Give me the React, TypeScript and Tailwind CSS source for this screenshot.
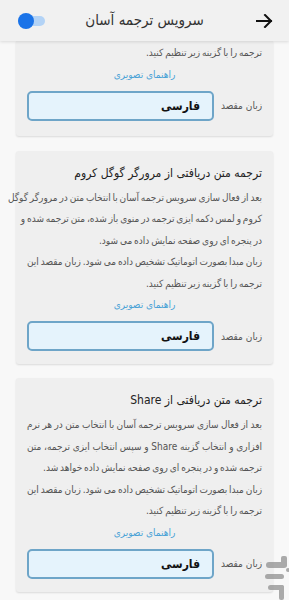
import React from "react";

const FONT = { fontFamily: '"DejaVu Sans Condensed", "DejaVu Sans", sans-serif' };

function Line({ text, justify }: { text: string; justify?: boolean }) {
  return (
    <div
      className={
        "whitespace-nowrap h-[21.5px] leading-[21.5px] [word-spacing:-1px] " +
        (justify ? "text-justify [text-align-last:justify]" : "text-right")
      }
    >
      {text}
    </div>
  );
}

function Target() {
  return (
    <>
      <div className="h-[22px] leading-[22px] text-center text-[10px] text-[#4aa2d6]">
        راهنمای تصویری
      </div>
      <div className="mt-[5px] flex items-center gap-[11px]">
        <div className="text-[10px] text-[#555] whitespace-nowrap w-[37px] shrink-0">زبان مقصد</div>
        <div className="shrink-0 h-[30px] w-[187px] rounded-[5px] border-2 border-[#6ea5c8] bg-[#e5f3fc] flex items-center pr-[12px]">
          <span className="text-[12px] font-bold text-[#111]">فارسی</span>
        </div>
      </div>
    </>
  );
}

function Card({ title, lines }: { title: string; lines: { t: string; j?: boolean }[] }) {
  return (
    <div className="mx-4 rounded-[3px] bg-[#efefef] shadow-[0_1px_2px_rgba(0,0,0,0.12)] px-[11px] pt-[12px] pb-[13px]">
      <div className="text-[12px] leading-[20px] text-[#222] whitespace-nowrap">{title}</div>
      <div className="mt-[4px] text-[10px] text-[#555]">
        {lines.map((l, i) => (
          <Line key={i} text={l.t} justify={l.j} />
        ))}
      </div>
      <Target />
    </div>
  );
}

function Watermark() {
  return (
    <svg
      className="absolute right-0 bottom-0 opacity-70"
      width="30"
      height="46"
      viewBox="0 0 30 46"
    >
      <g fill="#8a8a8a">
        <rect x="22" y="2" width="6" height="11" rx="2" />
        <rect x="7" y="8" width="21" height="6" rx="3" />
        <circle cx="29" cy="16" r="2" />
        <rect x="6" y="20" width="19" height="5" rx="2.5" />
        <rect x="9" y="31" width="16" height="5" rx="2.5" />
        <rect x="20" y="31" width="5" height="15" rx="2" />
      </g>
    </svg>
  );
}

export default function App() {
  return (
    <div dir="rtl" style={FONT} className="relative w-[289px] h-[600px] overflow-hidden bg-[#f8f8f8]">
      <div className="relative z-10 h-[41px] bg-[#f1f1f1] shadow-[0_1px_3px_rgba(0,0,0,0.12)] grid grid-cols-[1fr_auto_1fr] items-center">
        <div className="flex justify-start pr-[16px]">
          <svg width="17" height="14" viewBox="0 0 17 14" className="block">
            <path d="M1 7 H15 M9 1 L15 7 L9 13" fill="none" stroke="#111" strokeWidth="2" strokeLinecap="square" />
          </svg>
        </div>
        <div className="text-[15px] text-[#333] whitespace-nowrap">سرویس ترجمه آسان</div>
        <div className="flex justify-end pl-[18px]">
          <div className="relative w-[27px] h-[16px] flex items-center">
            <div className="absolute left-0 right-0 h-[10px] rounded-full bg-[#b3d3f6]" />
            <div className="absolute left-0 w-[16px] h-[16px] rounded-full bg-[#1a73e8]" />
          </div>
        </div>
      </div>

      <div className="mx-4 rounded-b-[3px] bg-[#efefef] shadow-[0_1px_2px_rgba(0,0,0,0.12)] px-[11px] pb-[15px] pt-[1px]">
        <div className="text-[10px] text-[#555]">
          <Line text="ترجمه را با گزینه زیر تنظیم کنید." />
        </div>
        <Target />
      </div>

      <div className="mt-[15px] flex flex-col gap-[14px]">
        <Card
          title="ترجمه متن دریافتی از مرورگر گوگل کروم"
          lines={[
            { t: "بعد از فعال سازی سرویس ترجمه آسان با انتخاب متن در مرورگر گوگل", j: true },
            { t: "کروم و لمس دکمه ایزی ترجمه در منوی باز شده، متن ترجمه شده و", j: true },
            { t: "در پنجره ای روی صفحه نمایش داده می شود." },
            { t: "زبان مبدا بصورت اتوماتیک تشخیص داده می شود. زبان مقصد این", j: true },
            { t: "ترجمه را با گزینه زیر تنظیم کنید." },
          ]}
        />
        <Card
          title="ترجمه متن دریافتی از Share"
          lines={[
            { t: "بعد از فعال سازی سرویس ترجمه آسان با انتخاب متن در هر نرم", j: true },
            { t: "افزاری و انتخاب گزینه Share و سپس انتخاب ایزی ترجمه، متن", j: true },
            { t: "ترجمه شده و در پنجره ای روی صفحه نمایش داده خواهد شد." },
            { t: "زبان مبدا بصورت اتوماتیک تشخیص داده می شود. زبان مقصد این", j: true },
            { t: "ترجمه را با گزینه زیر تنظیم کنید." },
          ]}
        />
      </div>
      <Watermark />
    </div>
  );
}
